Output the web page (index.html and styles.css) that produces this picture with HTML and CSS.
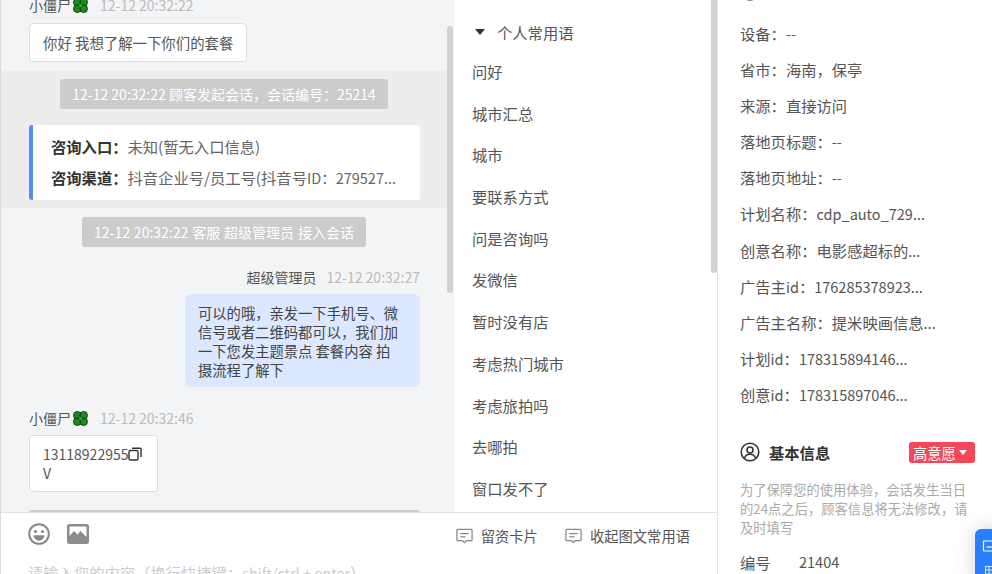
FILE: index.html
```html
<!DOCTYPE html>
<html lang="zh">
<head>
<meta charset="utf-8">
<title>会话</title>
<link rel="stylesheet" href="styles.css">
</head>
<body>
<div class="app">
  <div class="main">
    <div class="top">
      <section class="chat">
        <div class="scrollbar chat-thumb"></div>
        <div class="chat-scroll">
          <div class="meta">
            <span class="who">小僵尸</span>
            <svg class="clover" viewBox="0 0 16 16"><g fill="#1f8a1f" stroke="#143014" stroke-width=".8"><circle cx="5" cy="5" r="3.6"/><circle cx="11" cy="5" r="3.6"/><circle cx="5" cy="11" r="3.6"/><circle cx="11" cy="11" r="3.6"/></g><path d="M8 2v12M2 8h12" stroke="#0c4a0c" stroke-width=".7"/><circle cx="8" cy="8" r="1.200" fill="#35c035"/></svg>
            <span class="time">12-12 20:32:22</span>
          </div>
          <div class="bubble first">你好 我想了解一下你们的套餐</div>
          <div class="band">
            <div class="pill-row"><span class="pill">12-12 20:32:22 顾客发起会话，会话编号：25214</span></div>
            <div class="card">
              <div class="card-row"><b>咨询入口：</b>未知(暂无入口信息)</div>
              <div class="card-row"><b>咨询渠道：</b>抖音企业号/员工号(抖音号<span class="num">ID：279527...</span></div>
            </div>
          </div>
          <div class="pill-row second"><span class="pill">12-12 20:32:22 客服 超级管理员 接入会话</span></div>
          <div class="meta right">
            <span class="who">超级管理员</span>
            <span class="time">12-12 20:32:27</span>
          </div>
          <div class="bubble-row"><div class="bubble-self">可以的哦，亲发一下手机号、微信号或者二维码都可以，我们加一下您发主题景点 套餐内容 拍摄流程了解下</div></div>
          <div class="meta third">
            <span class="who">小僵尸</span>
            <svg class="clover" viewBox="0 0 16 16"><g fill="#1f8a1f" stroke="#143014" stroke-width=".8"><circle cx="5" cy="5" r="3.6"/><circle cx="11" cy="5" r="3.6"/><circle cx="5" cy="11" r="3.6"/><circle cx="11" cy="11" r="3.6"/></g><path d="M8 2v12M2 8h12" stroke="#0c4a0c" stroke-width=".7"/><circle cx="8" cy="8" r="1.200" fill="#35c035"/></svg>
            <span class="time">12-12 20:32:46</span>
          </div>
          <div class="bubble phone">13118922955<svg class="copy" viewBox="0 0 14 14"><rect x="1" y="3.500" width="9" height="9.500" rx="1.200" fill="#fff" stroke="#333" stroke-width="1.400"/><path d="M4 1.200h8.200a.8.800 0 0 1 .8.800v8" fill="none" stroke="#333" stroke-width="1.400"/></svg><br>V</div>
          <div class="next-pill"></div>
        </div>
      </section>
      <section class="phrases">
        <div class="scrollbar phrase-thumb"></div>
        <div class="phrase-head"><i class="caret"></i>个人常用语</div>
        <ul class="phrase-list">
          <li>问好</li><li>城市汇总</li><li>城市</li><li>要联系方式</li><li>问是咨询吗</li><li>发微信</li><li>暂时没有店</li><li>考虑热门城市</li><li>考虑旅拍吗</li><li>去哪拍</li><li>窗口发不了</li>
        </ul>
      </section>
    </div>
    <div class="composer">
      <div class="tools">
        <div class="tool-icons">
          <svg class="tool" viewBox="0 0 22 22"><circle cx="11" cy="11" r="9.800" fill="none" stroke="#888" stroke-width="2"/><circle cx="7.500" cy="8.500" r="1.600" fill="#888"/><circle cx="14.500" cy="8.500" r="1.600" fill="#888"/><path d="M5.500 12.200h11a5.500 5.500 0 0 1-11 0z" fill="#888"/></svg>
          <svg class="tool" viewBox="0 0 22 22"><rect width="22" height="20" y="1" rx="2.500" fill="#8c8c8c"/><path d="M2.500 13l4.500-5 3.500 3.500 3-3.500 6 6V3.500h-17z" fill="#fff"/></svg>
        </div>
        <div class="tool-links">
          <span class="tool-link"><svg class="msg" viewBox="0 0 18 16"><path d="M1.700 1h14.600a.8.800 0 0 1 .7.800v10.400a.8.800 0 0 1-.7.800H11l-2 2-2-2H1.700a.8.800 0 0 1-.7-.8V1.800a.8.800 0 0 1 .7-.8z" fill="none" stroke="#888" stroke-width="1.300"/><path d="M4.500 5.500h9M4.500 9h5.500" stroke="#888" stroke-width="1.300"/></svg>留资卡片</span>
          <span class="tool-link"><svg class="msg" viewBox="0 0 18 16"><path d="M1.700 1h14.600a.8.800 0 0 1 .7.800v10.400a.8.800 0 0 1-.7.800H11l-2 2-2-2H1.700a.8.800 0 0 1-.7-.8V1.800a.8.800 0 0 1 .7-.8z" fill="none" stroke="#888" stroke-width="1.300"/><path d="M4.500 5.500h9M4.500 9h5.500" stroke="#888" stroke-width="1.300"/></svg>收起图文常用语</span>
        </div>
      </div>
      <div class="placeholder">请输入您的内容（换行快捷键：<span class="num">shift/ctrl + enter</span>）</div>
    </div>
  </div>
  <aside class="info">
    <div class="clip-icon"><svg class="clip-svg" viewBox="0 0 20 20"><circle cx="10" cy="10" r="8.800" fill="none" stroke="#333" stroke-width="1.600"/></svg></div>
    <div class="fields">
      <div>设备：<span class="num">--</span></div>
      <div>省市：海南，保亭</div>
      <div>来源：直接访问</div>
      <div>落地页标题：<span class="num">--</span></div>
      <div>落地页地址：<span class="num">--</span></div>
      <div>计划名称：<span class="num">cdp_auto_729...</span></div>
      <div>创意名称：电影感超标的<span class="num">...</span></div>
      <div>广告主<span class="num">id</span>：<span class="num">176285378923...</span></div>
      <div>广告主名称：提米映画信息<span class="num">...</span></div>
      <div>计划<span class="num">id</span>：<span class="num">178315894146...</span></div>
      <div>创意<span class="num">id</span>：<span class="num">178315897046...</span></div>
    </div>
    <div class="basic-head">
      <svg class="user" viewBox="0 0 20 20"><circle cx="10" cy="10" r="8.800" fill="none" stroke="#333" stroke-width="1.600"/><circle cx="10" cy="8" r="3" fill="none" stroke="#333" stroke-width="1.600"/><path d="M4.500 16c1-2.800 3-3.800 5.500-3.800s4.500 1 5.500 3.800" fill="none" stroke="#333" stroke-width="1.600"/></svg>
      <strong>基本信息</strong>
      <span class="tag">高意愿<i class="tag-caret"></i></span>
    </div>
    <p class="note">为了保障您的使用体验，会话发生当日的24点之后，顾客信息将无法修改，请及时填写</p>
    <div class="id-row"><span class="id-label">编号</span><span class="id-value">21404</span></div>
  </aside>
</div>
<div class="float-btn">
  <svg class="float-icon" viewBox="0 0 14 12"><rect x="1" y="1" width="12" height="10" rx="1" fill="none" stroke="#fff" stroke-width="1.200"/><path d="M4 7h6" stroke="#fff" stroke-width="1.200"/></svg>
  <svg class="float-grid" viewBox="0 0 12 12"><path d="M.5.5h11v11H.5zM4 .5v11M8 .5v11M.5 4h11M.5 8h11" fill="none" stroke="#d8e8ff" stroke-width="1"/></svg>
</div>
</body>
</html>
```
FILE: styles.css
```css
* { box-sizing: border-box; }
html, body { margin: 0; height: 100%; overflow: hidden; background: #fff; }
body {
  font-family: "Noto Sans CJK SC", "Open Sans", sans-serif;
  font-size: 14px;
  color: #555;
  position: relative;
}
.num { font-size: 14.500px; }
.app { display: flex; width: 992px; height: 574px; }
.main {
  width: 718px;
  height: 574px;
  display: flex;
  flex-direction: column;
  border-left: 1px solid #ddd;
  border-right: 1px solid #e2e2e2;
  flex: none;
}
.top { display: flex; height: 512px; flex: none; }

.scrollbar { position: absolute; background: #d2d2d2; border-radius: 3px; }

.chat {
  position: relative;
  width: 453px;
  height: 512px;
  background: #f3f4f6;
  overflow: hidden;
  flex: none;
}
.chat-thumb { left: 446px; top: 26px; width: 6px; height: 267px; }
.chat-scroll { width: 446px; display: flex; flex-direction: column; margin-top: -5px; }
.meta { display: flex; align-items: center; height: 20px; padding: 0 28px; line-height: 20px; }
.meta.right { justify-content: flex-end; margin-top: 20px; padding-right: 27px; }
.meta.third { margin-top: 21px; }
.who { color: #555; }
.time { color: #bbb; margin-left: 10px; }
.clover { width: 17px; height: 17px; margin: 0 1px; }
.bubble {
  align-self: flex-start;
  margin: 8px 0 0 28px;
  background: #fff;
  border: 1px solid #ddd;
  border-radius: 4px;
  padding: 9px 13px;
  line-height: 19px;
}
.first { width: 218px; height: 39px; white-space: nowrap; font-size: 14.400px; }
.band { background: #ededed; margin-top: 9px; height: 137px; padding-top: 8px; }
.pill-row { display: flex; justify-content: center; height: 30px; }
.pill {
  background: #ccc;
  color: #fff;
  height: 30px;
  line-height: 30px;
  padding: 0 12.500px;
  border-radius: 2px;
  white-space: nowrap;
}
.second { margin-top: 9px; }
.second .pill { word-spacing: .75px; }
.card {
  margin: 16px 27px 0 28px;
  height: 75px;
  background: #fff;
  border-left: 4px solid #4f8ef7;
  border-radius: 3px;
  padding: 6px 0 0 18px;
  font-size: 15.300px;
}
.card-row { height: 31px; line-height: 31px; white-space: nowrap; overflow: hidden; color: #666; }
.card-row b { color: #333; font-weight: 700; }
.bubble-row { display: flex; justify-content: flex-end; padding-right: 27px; margin-top: 7px; }
.bubble-self {
  width: 235px;
  height: 93px;
  background: #dce8ff;
  border-radius: 6px;
  padding: 9px 20px 9px 13px;
  line-height: 19px;
  font-size: 14.300px;
  color: #444;
}
.phone { width: 129px; height: 57px; margin-top: 7px; padding: 9px 13px; }
.copy { width: 14px; height: 14px; vertical-align: -1px; }
.next-pill { margin: 18px 27px 0 28px; height: 30px; background: #ccc; border-radius: 3px; flex: none; }

.phrases { position: relative; flex: 1; background: #fff; overflow: hidden; font-size: 15.300px; }
.phrase-thumb { left: 257px; top: -5px; width: 6px; height: 278px; border-radius: 0 0 3px 3px; }
.phrase-head { display: flex; align-items: center; height: 20px; margin: 22px 0 0 21px; color: #555; }
.caret {
  width: 0; height: 0;
  border: 5.500px solid transparent;
  border-top: 6px solid #333;
  border-bottom: 0;
  margin-right: 12px;
}
.phrase-list { list-style: none; margin: 9px 0 0; padding: 0 0 0 18px; color: #555; }
.phrase-list li { height: 41.700px; line-height: 41px; }

.composer { flex: 1; background: #fff; border-top: 1px solid #e2e2e2; overflow: hidden; padding-left: 27px; }
.tools { display: flex; justify-content: space-between; height: 46px; padding-right: 27px; }
.tool-icons { display: flex; gap: 17px; padding-top: 10px; }
.tool { width: 22px; height: 22px; }
.tool-links { display: flex; gap: 27px; padding-top: 13px; align-items: flex-start; line-height: 20px; font-size: 14.300px; }
.tool-link { display: flex; align-items: center; gap: 8px; white-space: nowrap; }
.msg { width: 17px; height: 16px; }
.placeholder { color: #ccc; line-height: 20px; white-space: nowrap; margin-top: 3px; font-size: 15.300px; }

.info { flex: 1; padding: 0 17px 0 22px; background: #fff; overflow: hidden; position: relative; font-size: 15.300px; }
.clip-icon { height: 15px; display: flow-root; }
.clip-svg { display: block; width: 20px; height: 20px; margin-top: -19px; }
.fields div { height: 36.100px; line-height: 37px; white-space: nowrap; }
.basic-head { display: flex; align-items: center; height: 22px; margin-top: 29px; }
.user { width: 20px; height: 20px; margin-right: 9px; }
.basic-head strong { color: #333; font-weight: 700; flex: 1; }
.tag {
  display: flex;
  align-items: center;
  height: 21px;
  width: 66px;
  padding-left: 4px;
  background: #f5475a;
  color: #fff;
  border-radius: 3px;
  font-size: 14.300px;
}
.tag-caret { width: 0; height: 0; border: 4px solid transparent; border-top: 5px solid #fff; border-bottom: 0; margin-left: 3px; }
.note { margin: 17px 0 0; font-size: 13.300px; line-height: 19px; color: #aaa; }
.id-row { display: flex; margin-top: 15px; line-height: 20px; }
.id-label { width: 59px; }
.id-value { font-size: 14.500px; }

.float-btn {
  position: absolute;
  left: 975px;
  top: 529px;
  width: 30px;
  height: 60px;
  background: #2a7fff;
  border-radius: 6px 0 0 0;
  box-shadow: 0 0 20px rgba(0,0,0,.18);
  padding: 11px 0 0 7px;
}
.float-icon { display: block; width: 15px; height: 12px; }
.float-grid { display: block; width: 12px; height: 12px; margin: 14px 0 0 3px; }
```
